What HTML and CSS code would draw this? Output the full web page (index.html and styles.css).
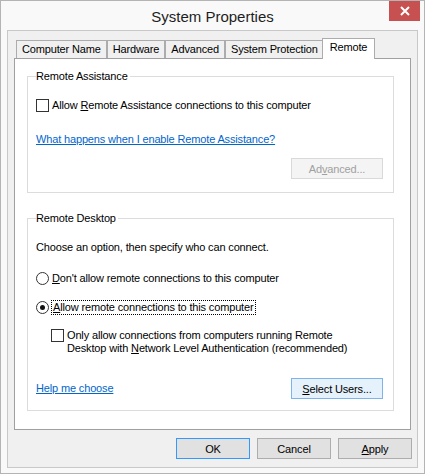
FILE: index.html
```html
<!DOCTYPE html>
<html>
<head>
<meta charset="utf-8">
<link rel="stylesheet" href="styles.css">
</head>
<body>
<div class="window">
  <div class="titlebar">
    <span></span>
    <span class="title">System Properties</span>
    <span class="close"><svg width="10" height="10" viewBox="0 0 10 10"><path d="M1 1L9 9M9 1L1 9" stroke="#fff" stroke-width="2"/></svg></span>
  </div>
  <div class="client">
    <div class="tabs">
      <div class="tab">Computer Name</div>
      <div class="tab">Hardware</div>
      <div class="tab">Advanced</div>
      <div class="tab">System Protection</div>
      <div class="tab active">Remote</div>
    </div>
    <div class="panel">
      <fieldset class="group ra">
        <legend>Remote Assistance</legend>
        <div class="row check-row">
          <span class="checkbox"></span>
          <span>Allow <u>R</u>emote Assistance connections to this computer</span>
        </div>
        <a class="link ra-link" href="#">What happens when I enable Remote Assistance?</a>
        <div class="btn-row ra-btns">
          <span class="btn disabled">Ad<u>v</u>anced...</span>
        </div>
      </fieldset>
      <fieldset class="group rd">
        <legend>Remote Desktop</legend>
        <div class="row choose">Choose an option, then specify who can connect.</div>
        <div class="row radio-row r1">
          <span class="radio"></span>
          <span><u>D</u>on't allow remote connections to this computer</span>
        </div>
        <div class="row radio-row r2">
          <span class="radio checked"></span>
          <span class="focus"><u>A</u>llow remote connections to this computer</span>
        </div>
        <div class="row nla-row">
          <span class="checkbox"></span>
          <span class="nla-text">Only allow connections from computers running Remote<br>Desktop with <u>N</u>etwork Level Authentication (recommended)</span>
        </div>
        <div class="bottom-row">
          <a class="link" href="#">Help me choose</a>
          <span class="btn hot"><u>S</u>elect Users...</span>
        </div>
      </fieldset>
    </div>
    <div class="dialog-buttons">
      <span class="btn default">OK</span>
      <span class="btn">Cancel</span>
      <span class="btn"><u>A</u>pply</span>
    </div>
  </div>
</div>
</body>
</html>
```

FILE: styles.css
```css
* { box-sizing: border-box; }
html, body { margin: 0; padding: 0; background: #fff; }
body {
  font-family: "Liberation Sans", Arial, sans-serif;
  font-size: 11px;
  letter-spacing: -0.15px;
  color: #000;
}
.window {
  width: 425px;
  height: 474px;
  border: 1px solid #b4b4b4;
  background: #f9f9f9;
  padding: 0 6px 5px 6px;
  display: flex;
  flex-direction: column;
}
.titlebar {
  height: 29px;
  display: grid;
  grid-template-columns: 1fr auto 1fr;
  margin: 0 -6px;
}
.title {
  font-size: 15px;
  line-height: 20px;
  padding-top: 6px;
  color: #1e1e1e;
  letter-spacing: 0;
}
.close {
  justify-self: end;
  width: 31px;
  height: 20px;
  margin-right: 4px;
  background: #c75050;
  display: flex;
  align-items: center;
  justify-content: center;
}
.client {
  flex: 1;
  border: 1px solid #c8c8c8;
  background: #f0f0f0;
  padding: 7px 6px 0 6px;
  display: flex;
  flex-direction: column;
}
.tabs {
  display: flex;
  align-items: flex-end;
  padding-left: 2px;
  height: 20px;
  position: relative;
  z-index: 1;
}
.tab {
  height: 18px;
  line-height: 16px;
  padding: 0 5px;
  border: 1px solid #acacac;
  border-bottom: none;
  background: #f0f0f0;
  color: #000;
}
.tab.active {
  height: 21px;
  margin: 0 -2px -1px -2px;
  background: #fff;
  line-height: 17px;
  padding: 0 7px;
  position: relative;
}
.panel {
  height: 372px;
  border: 1px solid #a0a0a0;
  background: #fff;
  padding: 10px 16px 0 12px;
}
.group {
  margin: 0;
  border: 1px solid #dcdcdc;
  padding: 0 10px 0 8px;
  min-width: 0;
}
.group legend {
  padding: 0 2px 0 0;
  margin-left: 0;
  line-height: 14px;
}
.row {
  display: flex;
  align-items: center;
  line-height: 15px;
}
.checkbox {
  width: 13px;
  height: 13px;
  border: 1px solid #333;
  background: #fff;
  margin-right: 3px;
  flex: none;
}
.radio {
  width: 13px;
  height: 13px;
  border: 1px solid #333;
  border-radius: 50%;
  background: #fff;
  margin-right: 3px;
  flex: none;
  display: flex;
  align-items: center;
  justify-content: center;
}
.radio.checked::after {
  content: "";
  width: 5px;
  height: 5px;
  border-radius: 50%;
  background: #111;
}
.check-row { margin-top: 15px; }
.link {
  display: block;
  color: #0066cc;
  text-decoration: underline;
  line-height: 15px;
}
.ra-link { margin-top: 19px; }
.btn-row {
  display: flex;
  justify-content: flex-end;
}
.ra-btns { margin-top: 11px; padding-bottom: 13px; }
.btn {
  width: 92px;
  height: 21px;
  border: 1px solid #adadad;
  background: #e1e1e1;
  display: flex;
  align-items: center;
  justify-content: center;
  color: #000;
}
.btn.disabled {
  background: #f4f4f4;
  border-color: #d9d9d9;
  color: #a0a0a0;
}
.btn.hot {
  background: #e5f1fb;
  border-color: #7eb4ea;
}
.rd { margin-top: 18px; }
.choose { margin-top: 15px; }
.r1 { margin-top: 16px; }
.r2 { margin-top: 15px; }
.focus {
  outline: 1px dotted #000;
  outline-offset: 0;
  line-height: 13px;
  padding: 0 1px;
}
.nla-row {
  margin-top: 15px;
  padding-left: 15px;
  align-items: flex-start;
}
.nla-text { line-height: 13px; margin-top: 0; }
.bottom-row {
  display: flex;
  justify-content: space-between;
  align-items: center;
  margin-top: 23px;
  padding-bottom: 11px;
}
.dialog-buttons {
  display: flex;
  justify-content: flex-end;
  gap: 7px;
  padding-top: 8px;
  margin-right: -1px;
}
.dialog-buttons .btn { width: 74px; }
.btn.default { border-color: #3399ff; }
```
